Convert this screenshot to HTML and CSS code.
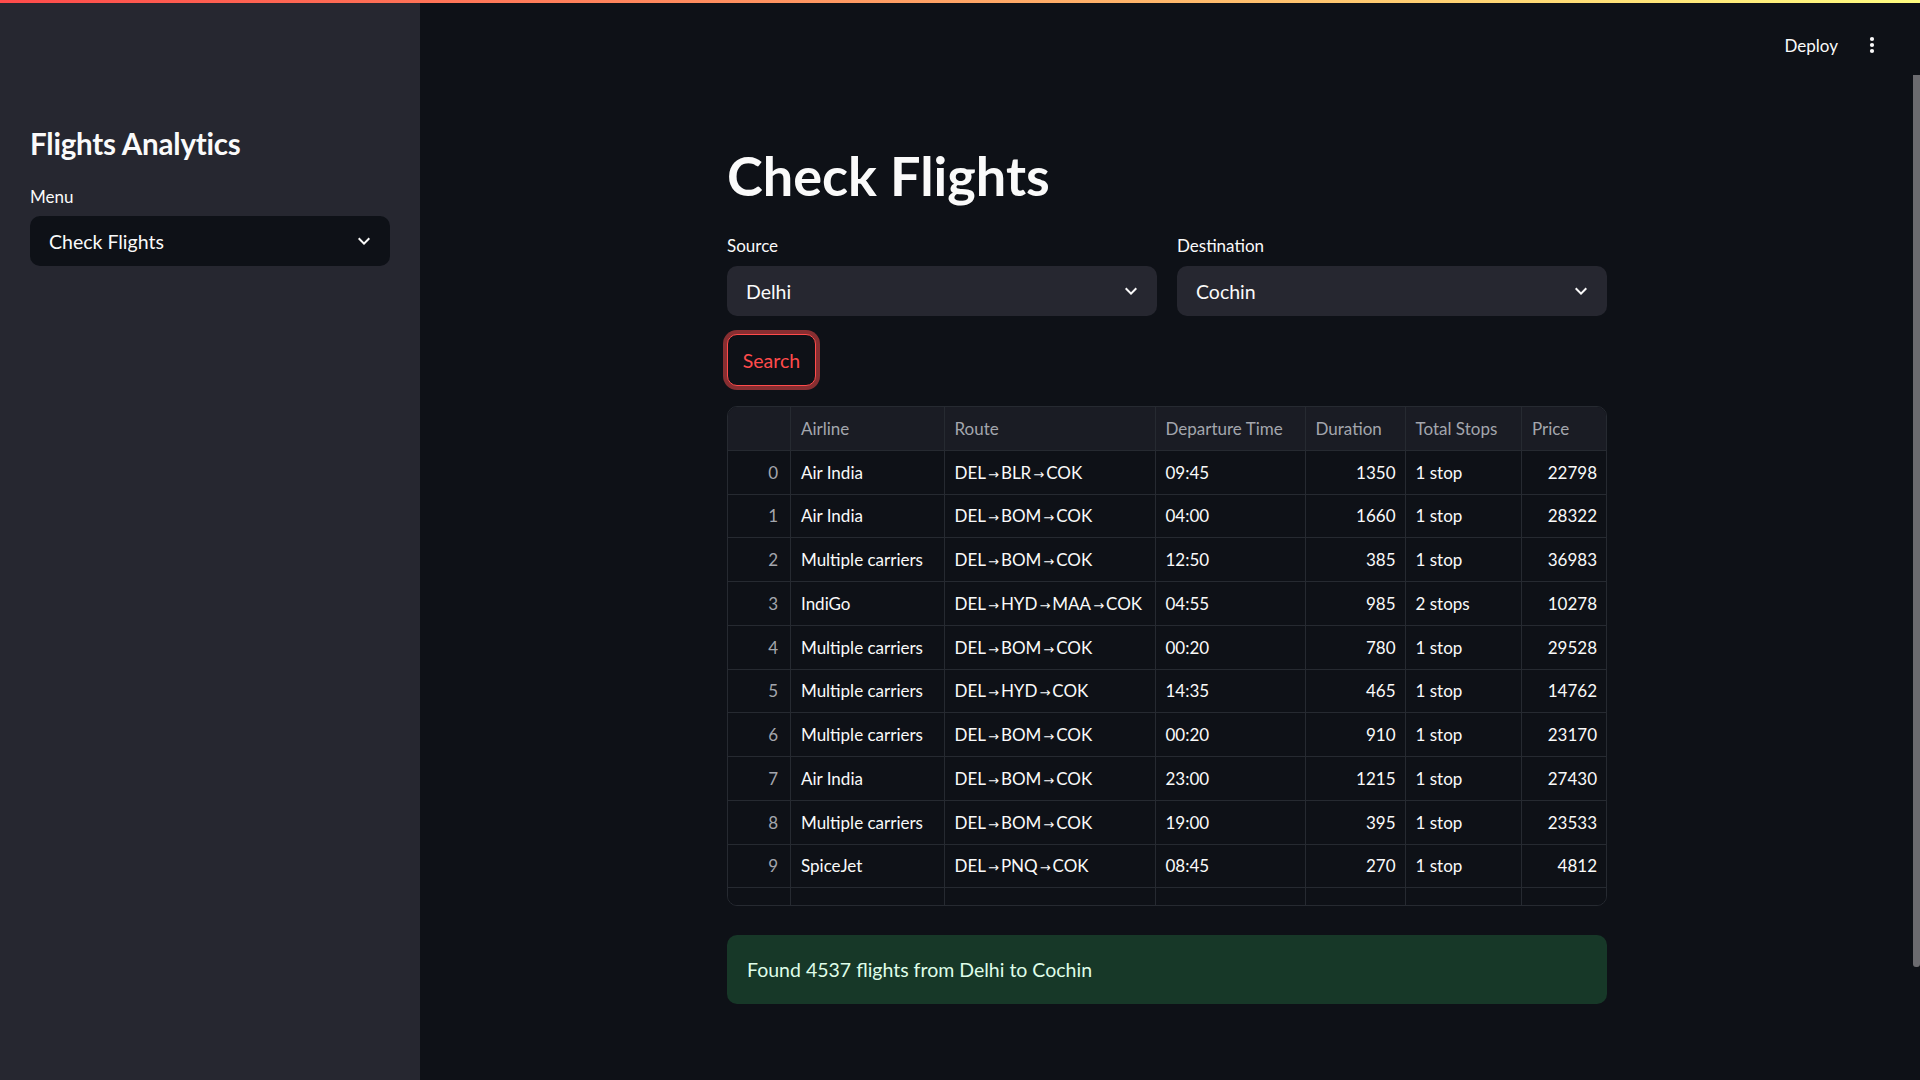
FILE: index.html
```html
<!DOCTYPE html>
<html lang="en">
<head>
<meta charset="utf-8">
<title>Check Flights</title>
<link rel="stylesheet" href="styles.css">
</head>
<body>
<div class="decoration"></div>
<div class="app">
  <aside class="sidebar">
    <h2 class="side-title">Flights Analytics</h2>
    <div class="label">Menu</div>
    <div class="select select-dark">
      <span class="select-value">Check Flights</span>
      <svg class="chev" viewBox="0 0 24 24" width="24" height="24"><path d="M7.41 8.59L12 13.17l4.59-4.58L18 10l-6 6-6-6 1.41-1.41z" fill="currentColor"/></svg>
    </div>
  </aside>
  <main class="main">
    <header class="topbar">
      <span class="deploy">Deploy</span>
      <span class="kebab"><svg viewBox="0 0 16 24" width="16" height="24"><circle cx="8" cy="6" r="2.1" fill="currentColor"/><circle cx="8" cy="12" r="2.1" fill="currentColor"/><circle cx="8" cy="18" r="2.1" fill="currentColor"/></svg></span>
    </header>
    <div class="content">
      <div class="block">
        <h1 class="page-title">Check Flights</h1>
        <div class="row2">
          <div class="field">
            <div class="label">Source</div>
            <div class="select">
              <span class="select-value">Delhi</span>
              <svg class="chev" viewBox="0 0 24 24" width="24" height="24"><path d="M7.41 8.59L12 13.17l4.59-4.58L18 10l-6 6-6-6 1.41-1.41z" fill="currentColor"/></svg>
            </div>
          </div>
          <div class="field">
            <div class="label">Destination</div>
            <div class="select">
              <span class="select-value">Cochin</span>
              <svg class="chev" viewBox="0 0 24 24" width="24" height="24"><path d="M7.41 8.59L12 13.17l4.59-4.58L18 10l-6 6-6-6 1.41-1.41z" fill="currentColor"/></svg>
            </div>
          </div>
        </div>
        <div class="btn-row"><button class="btn">Search</button></div>
        <div class="grid">
          <div class="c h"></div><div class="c h">Airline</div><div class="c h">Route</div><div class="c h">Departure Time</div><div class="c h">Duration</div><div class="c h">Total Stops</div><div class="c h last">Price</div>

          <div class="c idx">0</div><div class="c">Air India</div><div class="c"><span>DEL<span class="arr">→</span>BLR<span class="arr">→</span>COK</span></div><div class="c">09:45</div><div class="c num">1350</div><div class="c">1 stop</div><div class="c num last">22798</div>
          <div class="c idx">1</div><div class="c">Air India</div><div class="c"><span>DEL<span class="arr">→</span>BOM<span class="arr">→</span>COK</span></div><div class="c">04:00</div><div class="c num">1660</div><div class="c">1 stop</div><div class="c num last">28322</div>
          <div class="c idx">2</div><div class="c">Multiple carriers</div><div class="c"><span>DEL<span class="arr">→</span>BOM<span class="arr">→</span>COK</span></div><div class="c">12:50</div><div class="c num">385</div><div class="c">1 stop</div><div class="c num last">36983</div>
          <div class="c idx">3</div><div class="c">IndiGo</div><div class="c"><span>DEL<span class="arr">→</span>HYD<span class="arr">→</span>MAA<span class="arr">→</span>COK</span></div><div class="c">04:55</div><div class="c num">985</div><div class="c">2 stops</div><div class="c num last">10278</div>
          <div class="c idx">4</div><div class="c">Multiple carriers</div><div class="c"><span>DEL<span class="arr">→</span>BOM<span class="arr">→</span>COK</span></div><div class="c">00:20</div><div class="c num">780</div><div class="c">1 stop</div><div class="c num last">29528</div>
          <div class="c idx">5</div><div class="c">Multiple carriers</div><div class="c"><span>DEL<span class="arr">→</span>HYD<span class="arr">→</span>COK</span></div><div class="c">14:35</div><div class="c num">465</div><div class="c">1 stop</div><div class="c num last">14762</div>
          <div class="c idx">6</div><div class="c">Multiple carriers</div><div class="c"><span>DEL<span class="arr">→</span>BOM<span class="arr">→</span>COK</span></div><div class="c">00:20</div><div class="c num">910</div><div class="c">1 stop</div><div class="c num last">23170</div>
          <div class="c idx">7</div><div class="c">Air India</div><div class="c"><span>DEL<span class="arr">→</span>BOM<span class="arr">→</span>COK</span></div><div class="c">23:00</div><div class="c num">1215</div><div class="c">1 stop</div><div class="c num last">27430</div>
          <div class="c idx">8</div><div class="c">Multiple carriers</div><div class="c"><span>DEL<span class="arr">→</span>BOM<span class="arr">→</span>COK</span></div><div class="c">19:00</div><div class="c num">395</div><div class="c">1 stop</div><div class="c num last">23533</div>
          <div class="c idx">9</div><div class="c">SpiceJet</div><div class="c"><span>DEL<span class="arr">→</span>PNQ<span class="arr">→</span>COK</span></div><div class="c">08:45</div><div class="c num">270</div><div class="c">1 stop</div><div class="c num last">4812</div>
          <div class="c idx"></div><div class="c"></div><div class="c"></div><div class="c"></div><div class="c num"></div><div class="c"></div><div class="c num last"></div>
        </div>
        <div class="alert">Found 4537 flights from Delhi to Cochin</div>
      </div>
    </div>
    <div class="scroll-thumb"></div>
  </main>
</div>
</body>
</html>
```
FILE: styles.css
```css
* { box-sizing: border-box; }
html, body {
  margin: 0;
  padding: 0;
  height: 1080px;
  overflow: hidden;
  background: #0e1117;
  color: #fafafa;
  font-family: Lato, "Source Sans Pro", "Noto Sans", sans-serif;
}
.decoration {
  position: absolute;
  top: 0;
  left: 0;
  right: 0;
  height: 3px;
  background: linear-gradient(90deg, #ff4b4b, #fffd80);
  z-index: 5;
}
.app {
  display: flex;
  height: 1080px;
}
.sidebar {
  width: 420px;
  flex: none;
  background: #262730;
  padding: 126px 30px 0 30px;
}
.side-title {
  margin: 0 0 21px 0;
  font-size: 29.5px;
  line-height: 36px;
  font-weight: 700;
  letter-spacing: -0.2px;
}
.sidebar .label {
  margin-bottom: 5px;
}
.label {
  font-size: 17px;
  line-height: 28px;
  margin-bottom: 7px;
  color: #fafafa;
}
.select {
  height: 50px;
  border-radius: 10px;
  background: #262730;
  display: flex;
  align-items: center;
  justify-content: space-between;
  padding: 0 14px 0 19px;
  font-size: 19.5px;
}
.select-dark {
  background: #0e1117;
}
.chev {
  color: #fafafa;
  flex: none;
}
.main {
  flex: 1;
  position: relative;
  display: flex;
  flex-direction: column;
}
.topbar {
  height: 75px;
  padding: 15px 40px 0 0;
  display: flex;
  justify-content: flex-end;
  align-items: center;
  gap: 26px;
}
.deploy {
  font-size: 17px;
}
.kebab {
  display: flex;
  color: #fafafa;
}
.content {
  padding: 68px 6px 0 0;
}
.block {
  width: 880px;
  margin: 0 auto;
}
.page-title {
  margin: 0 0 23px 0;
  font-size: 54px;
  line-height: 66px;
  font-weight: 700;
  letter-spacing: 0;
}
.row2 {
  display: grid;
  grid-template-columns: 1fr 1fr;
  gap: 20px;
}
.field .label {
  margin-bottom: 6px;
}
.btn-row {
  margin-top: 18px;
  display: flex;
}
.btn {
  height: 52px;
  width: 89px;
  border: 1px solid #ff4b4b;
  border-radius: 10px;
  background: #0e1117;
  color: #ff4b4b;
  font-family: inherit;
  font-size: 19.5px;
  padding: 0;
  box-shadow: 0 0 0 4px rgba(255, 75, 75, 0.5);
}
.grid {
  margin-top: 20px;
  height: 500px;
  border: 1px solid #262a31;
  border-radius: 10px;
  overflow: hidden;
  display: grid;
  grid-template-columns: 63px 153.5px 211px 150px 100px 116.5px 1fr;
  grid-auto-rows: 43.75px;
  font-size: 17px;
}
.c {
  border-right: 1px solid #262a31;
  border-bottom: 1px solid #262a31;
  padding: 0 10px;
  display: flex;
  align-items: center;
  white-space: nowrap;
  overflow: hidden;
  background: #0e1117;
}
.c.last { border-right: none; }
.c.h {
  background: #1a1c24;
  color: #a3a6ad;
}
.c.idx {
  justify-content: flex-end;
  color: #a3a6ad;
  padding-right: 12px;
}
.c.num {
  justify-content: flex-end;
  padding-right: 9px;
}
.arr {
  font-family: "DejaVu Sans", sans-serif;
  font-size: 13px;
  margin: 0 2px;
}
.alert {
  margin-top: 29px;
  height: 69px;
  border-radius: 10px;
  background: #173828;
  color: #dffde9;
  display: flex;
  align-items: center;
  padding: 0 20px;
  font-size: 19.5px;
}
.scroll-thumb {
  position: absolute;
  right: 0;
  top: 75px;
  width: 7px;
  height: 892px;
  background: #6b6b6f;
  border-radius: 0 0 3px 3px;
}
```
